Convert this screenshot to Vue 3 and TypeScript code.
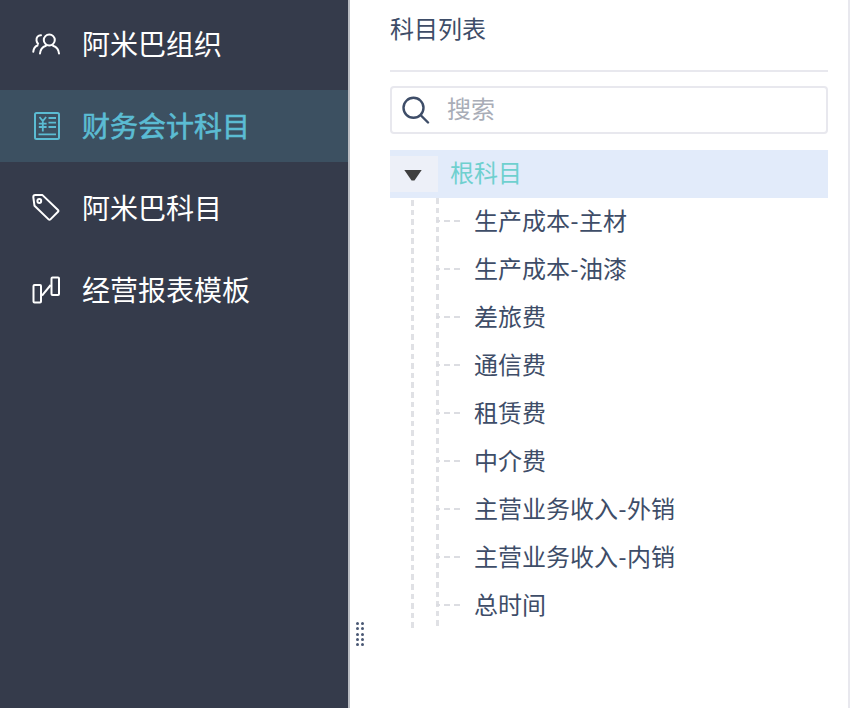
<template>
  <div class="page">
    <aside class="sidebar">
      <div
        v-for="item in menu"
        :key="item.name"
        class="menu-item"
        :class="{ active: item.active }"
      >
        <svg class="menu-icon" viewBox="0 0 28 28" fill="none" stroke="currentColor" stroke-width="2">
          <template v-if="item.icon === 'people'">
            <circle cx="17.300" cy="10" r="5.500" />
            <path d="M8 23.500c.3-4 3-6.800 6-7.800M27 23.500c-.3-4-3-6.800-6-7.800" stroke-linecap="round" />
            <path d="M9 5.200C6.300 5 4 7.500 4.500 10.500c.2 1.400.8 2.400 1.600 3.200M5.500 15.500C3 16.500 1.500 19 1.300 21.700" stroke-linecap="round" />
          </template>
          <template v-else-if="item.icon === 'ledger'">
            <rect x="3" y="1" width="24" height="26" rx="1.500" />
            <path d="M7.500 5l3.300 4 3.300-4M10.800 8.500v11M6.800 11.700h7.800M6.800 15h7.800M16.500 6h7.500M16.500 10.700h7.500M16.500 15h7.500M6.500 22.300h17.500" stroke-width="1.800" />
          </template>
          <template v-else-if="item.icon === 'tag'">
            <path d="M1.300 3c0-1.200.7-1.900 1.900-1.900h7.300L26 16c.6.600.6 1.200 0 1.800l-7.600 7.600c-.6.600-1.200.6-1.800 0L2.500 11.800Z" stroke-linejoin="round" />
            <circle cx="7.300" cy="7" r="1.900" />
          </template>
          <template v-else>
            <rect x="1.500" y="9" width="7.500" height="17.500" rx="1" />
            <rect x="19.500" y="1.500" width="7.500" height="17.500" rx="1" />
            <path d="M10 19.700 18.700 9" />
          </template>
        </svg>
        <span class="menu-label">{{ item.name }}</span>
      </div>
    </aside>

    <main class="content">
      <div class="grip" aria-hidden="true">
        <i v-for="n in 10" :key="n"></i>
      </div>

      <h1 class="title">科目列表</h1>

      <div class="search">
        <svg class="search-icon" viewBox="0 0 28 28" fill="none" stroke="#3e4d68" stroke-width="2.400">
          <circle cx="11.500" cy="11.800" r="10" />
          <path d="M19 19.500 26 26.500" stroke-linecap="round" />
        </svg>
        <span class="placeholder">搜索</span>
      </div>

      <div class="tree">
        <div class="root-row">
          <span class="toggle"><i class="caret"></i></span>
          <span class="root-label">根科目</span>
        </div>
        <div class="children">
          <div v-for="child in accounts" :key="child" class="child-row">
            <span class="dash"></span>
            <span class="child-label">{{ child }}</span>
          </div>
        </div>
      </div>
    </main>
  </div>
</template>

<script setup lang="ts">
type MenuItem = { name: string; icon: string; active?: boolean };

const menu: MenuItem[] = [
  { name: '阿米巴组织', icon: 'people' },
  { name: '财务会计科目', icon: 'ledger', active: true },
  { name: '阿米巴科目', icon: 'tag' },
  { name: '经营报表模板', icon: 'chart' }
];

const accounts = [
  '生产成本-主材',
  '生产成本-油漆',
  '差旅费',
  '通信费',
  '租赁费',
  '中介费',
  '主营业务收入-外销',
  '主营业务收入-内销',
  '总时间'
];
</script>

<style>
html,
body {
  margin: 0;
  background: #fff;
}
</style>

<style scoped>
.page {
  display: flex;
  width: 854px;
  height: 708px;
  overflow: hidden;
  font-family: Lato, "Noto Sans CJK SC", sans-serif;
}

.sidebar {
  flex: none;
  box-sizing: border-box;
  width: 350px;
  height: 100%;
  padding-top: 8px;
  background: #353b4b;
  border-right: 2px solid #b9bcc2;
}

.menu-item {
  display: flex;
  align-items: center;
  height: 72px;
  margin-bottom: 10px;
  padding-left: 32px;
  font-size: 28px;
  color: #fff;
}

.menu-item.active {
  background: #3c5061;
  color: #5bbcd3;
}

.menu-item.active .menu-label {
  -webkit-text-stroke: 0.6px #5bbcd3;
}

.menu-icon {
  flex: none;
  width: 28px;
  height: 28px;
  margin-right: 22px;
}

.menu-label {
  line-height: 34px;
}

.content {
  position: relative;
  box-sizing: border-box;
  flex: none;
  width: 500px;
  height: 100%;
  padding: 0 20px 0 40px;
  border-right: 2px solid #e8e8ee;
  color: #3e4d68;
}

.grip {
  position: absolute;
  left: 6px;
  top: 622px;
  display: grid;
  grid-template-columns: 3px 3px;
  gap: 2.300px 2px;
}

.grip i {
  width: 3px;
  height: 3px;
  border-radius: 50%;
  background: #4a5874;
}

.title {
  box-sizing: border-box;
  height: 72px;
  margin: 0;
  padding-top: 12px;
  font-size: 24px;
  line-height: 34px;
  font-weight: 400;
  border-bottom: 2px solid #e8e8ee;
}

.search {
  display: flex;
  align-items: center;
  box-sizing: border-box;
  height: 48px;
  margin-top: 14px;
  padding-left: 10px;
  border: 2px solid #e8e8ee;
  border-radius: 4px;
}

.search-icon {
  width: 28px;
  height: 28px;
  margin-right: 17px;
}

.placeholder {
  font-size: 24px;
  line-height: 30px;
  padding-bottom: 2px;
  color: #a9adb7;
}

.tree {
  margin-top: 16px;
}

.root-row {
  display: flex;
  align-items: center;
  height: 48px;
  background: #e2ebfa;
}

.toggle {
  display: flex;
  align-items: center;
  justify-content: center;
  width: 48px;
  height: 36px;
  background: #edf0f8;
}

.caret {
  width: 18px;
  height: 11px;
  margin: 2px 2px 0 0;
  background: #3f3f3f;
  clip-path: polygon(0 0, 100% 0, 58% 100%, 42% 100%);
}

.root-label {
  margin-left: 12px;
  font-size: 24px;
  line-height: 30px;
  padding-bottom: 2px;
  color: #6fd0cf;
}

.children {
  height: 432px;
  padding-left: 46px;
  background-image:
    repeating-linear-gradient(to bottom, #e0e1e5 0 5.600px, transparent 5.600px 9.600px),
    repeating-linear-gradient(to bottom, #e0e1e5 0 5.600px, transparent 5.600px 9.600px);
  background-size: 3px 100%, 3px 100%;
  background-position: 21px 2px, 46px 0;
  background-repeat: no-repeat;
}

.child-row {
  display: flex;
  align-items: center;
  height: 48px;
  font-size: 24px;
}

.child-label {
  line-height: 30px;
  padding-bottom: 2px;
}

.dash {
  flex: none;
  width: 24px;
  height: 2px;
  margin: 0 14px 2px 0;
  background: linear-gradient(to right, #dcdde2 6px, transparent 6px) -2px 0 / 10px 2px repeat-x;
}
</style>
